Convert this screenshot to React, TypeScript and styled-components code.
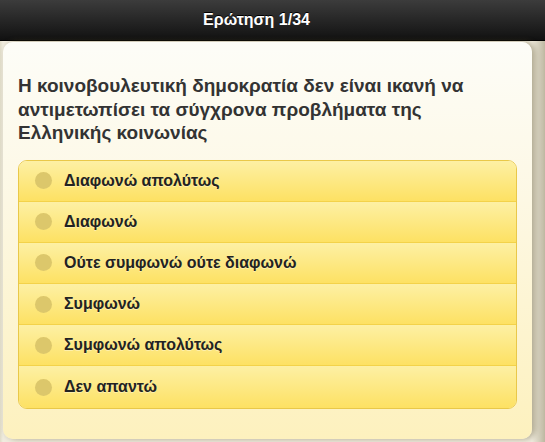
import styled, { createGlobalStyle } from "styled-components";

const GlobalStyle = createGlobalStyle`
    html, body {
        margin: 0;
        padding: 0;
        height: 100%;
        overflow: hidden;
    }
    body {
        background: #1c1c1c;
        font-family: "Liberation Sans", Arial, sans-serif;
    }
`;

const Page = styled.div`
    display: flex;
    flex-direction: column;
    width: 545px;
    height: 442px;
`;

const Header = styled.header`
    display: flex;
    align-items: center;
    justify-content: center;
    height: 40px;
    flex: none;
    padding-right: 32px;
    background: linear-gradient(#3c3c3c, #111111);
    border-bottom: 1px solid #000;
    color: #fff;
    font-weight: bold;
    font-size: 16px;
    text-shadow: 0 -1px 0 #000;
`;

const Body = styled.div`
    flex: 1;
    padding: 1px 13px 3px 3px;
    background: linear-gradient(to right, #e0dcc8 0px, #f1ede0 3px, #f1ede0 532px, #bdb7a0 545px);
`;

const Card = styled.div`
    height: 100%;
    box-sizing: border-box;
    border-radius: 10px;
    padding: 32px 15px 0 15px;
    background: linear-gradient(#fdfdf8 0%, #fdf8e4 40%, #fdf1be 100%);
    box-shadow: 3px 0 6px rgba(90, 80, 40, 0.45);
`;

const Question = styled.h2`
    margin: 0 0 15px 0;
    font-size: 19px;
    line-height: 23.5px;
    font-weight: bold;
    color: #333;
`;

const Options = styled.ul`
    list-style: none;
    margin: 0;
    padding: 0;
    border: 1px solid #e9c849;
    border-radius: 9px;
    overflow: hidden;
`;

const Option = styled.li<{ $last?: boolean }>`
    display: flex;
    align-items: center;
    height: 41.2px;
    box-sizing: border-box;
    padding-left: 16px;
    gap: 12px;
    background: linear-gradient(#fdf0a4, #fde163);
    border-bottom: ${(p) => (p.$last ? "none" : "1px solid #f3d24a")};
    font-weight: bold;
    font-size: 16px;
    color: #222;
    text-shadow: 0 1px 0 rgba(255, 255, 255, 0.4);
`;

const Radio = styled.span`
    display: block;
    width: 17px;
    height: 17px;
    border-radius: 50%;
    background: #dcc76b;
    flex: none;
`;

const answers = [
    "Διαφωνώ απολύτως",
    "Διαφωνώ",
    "Ούτε συμφωνώ ούτε διαφωνώ",
    "Συμφωνώ",
    "Συμφωνώ απολύτως",
    "Δεν απαντώ",
];

const App = () => {
    return (
        <>
            <GlobalStyle />
            <Page>
                <Header>Ερώτηση 1/34</Header>
                <Body>
                    <Card>
                        <Question>
                            Η κοινοβουλευτική δημοκρατία δεν είναι ικανή να αντιμετωπίσει τα σύγχρονα προβλήματα της Ελληνικής κοινωνίας
                        </Question>
                        <Options>
                            {answers.map((a, i) => (
                                <Option key={a} $last={i === answers.length - 1}>
                                    <Radio />
                                    {a}
                                </Option>
                            ))}
                        </Options>
                    </Card>
                </Body>
            </Page>
        </>
    );
};

export default App;
